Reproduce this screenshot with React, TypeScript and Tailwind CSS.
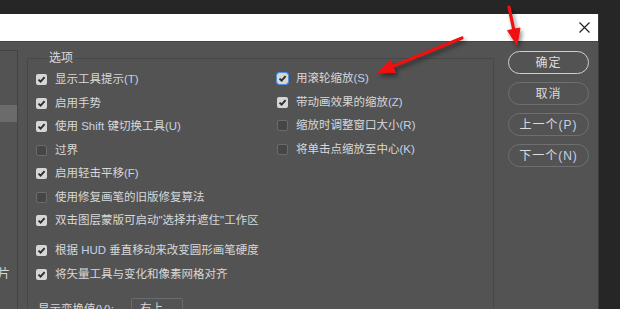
import type { ReactNode } from 'react';

const font = { fontFamily: '"Liberation Sans", "Noto Sans CJK SC", sans-serif' };

// ascii runs get the faint blue tint seen in the screenshot
function Label({ text }: { text: string }) {
  const parts = text.split(/([A-Za-z()]+(?:\([A-Z]\))?)/g).filter(Boolean);
  return (
    <span>
      {parts.map((p, i) =>
        /[A-Za-z]/.test(p) ? (
          <span key={i} className="text-[#c3d2ea]">{p}</span>
        ) : (
          <span key={i}>{p}</span>
        )
      )}
    </span>
  );
}

function Box({ checked, focus }: { checked: boolean; focus?: boolean }) {
  if (!checked)
    return <span className="w-[11px] h-[11px] rounded-[2px] bg-[#464646] border border-[#6b6b6b] shrink-0" />;
  return (
    <span
      className={`w-[11px] h-[11px] rounded-[2px] bg-[#d6d6d6] shrink-0 flex items-center justify-center ${
        focus ? 'outline outline-[1.5px] outline-[#4d8fe0]' : ''
      }`}
    >
      <svg width="9" height="9" viewBox="0 0 9 9">
        <path d="M1.5 4.6 L3.6 6.7 L7.6 2.2" fill="none" stroke="#2e2e2e" strokeWidth="1.9" />
      </svg>
    </span>
  );
}

function Row({ label, checked, focus, extra }: { label: string; checked: boolean; focus?: boolean; extra?: string }) {
  return (
    <div className={`h-[23.5px] flex items-center gap-[8px] ${extra ?? ''}`}>
      <Box checked={checked} focus={focus} />
      <Label text={label} />
    </div>
  );
}

const leftRows = [
  { label: '显示工具提示(T)', checked: true },
  { label: '启用手势', checked: true },
  { label: '使用 Shift 键切换工具(U)', checked: true },
  { label: '过界', checked: false },
  { label: '启用轻击平移(F)', checked: true },
  { label: '使用修复画笔的旧版修复算法', checked: false },
  { label: '双击图层蒙版可启动"选择并遮住"工作区', checked: true },
];

const lowerRows = [
  { label: '根据 HUD 垂直移动来改变圆形画笔硬度', checked: true },
  { label: '将矢量工具与变化和像素网格对齐', checked: true },
];

const rightRows = [
  { label: '用滚轮缩放(S)', checked: true, focus: true },
  { label: '带动画效果的缩放(Z)', checked: true },
  { label: '缩放时调整窗口大小(R)', checked: false },
  { label: '将单击点缩放至中心(K)', checked: false },
];

function Btn({ children, primary }: { children: ReactNode; primary?: boolean }) {
  return (
    <div
      className={`h-[23px] rounded-full flex items-center justify-center text-[12px] text-[#dcdcdc] tracking-[1px] ${
        primary ? 'border-[1.5px] border-[#cfcfcf]' : 'border border-[#6f6f6f]'
      }`}
    >
      {children}
    </div>
  );
}

export default function App() {
  return (
    <div className="relative w-[620px] h-[309px] overflow-hidden bg-[#262626] pt-[14px]" style={font}>
      <div className="w-[599px] h-[295px] flex flex-col border-r border-[#3a3a3a]">
        {/* title bar */}
        <div className="h-[27px] bg-white flex items-center justify-end pr-[8px] shrink-0">
          <svg width="11" height="11" viewBox="0 0 11 11">
            <path d="M0.5 0.5 L10.5 10.5 M10.5 0.5 L0.5 10.5" stroke="#222" strokeWidth="1.2" />
          </svg>
        </div>

        {/* body */}
        <div className="flex-1 bg-[#535353] border-t border-[#454545] flex text-[11.5px] text-[#d8d8d8]">
          {/* left category list */}
          <div className="w-[18px] mt-[8px] border-t border-r border-[#444] flex flex-col shrink-0">
            <div className="h-[54px]" />
            <div className="h-[17px] bg-[#6b6b6b]" />
            <div className="h-[144px]" />
            <div className="text-[12px] leading-[16px] -ml-[2px]">片</div>
          </div>

          {/* options group */}
          <fieldset className="ml-[9px] mt-[8px] w-[467px] h-[300px] border border-[#474747] pl-[8px] pt-[2px] shrink-0">
            <legend className="ml-[11px] px-[2px] text-[12px] leading-[16px] text-[#dcdcdc]">选项</legend>
            <div className="flex">
              <div className="w-[241px] shrink-0 flex flex-col whitespace-nowrap">
                {leftRows.map((r) => (
                  <Row key={r.label} {...r} />
                ))}
                {lowerRows.map((r, i) => (
                  <Row key={r.label} {...r} extra={i === 0 ? 'mt-[6.5px]' : ''} />
                ))}
                <div className="mt-[12px] ml-[2px] flex items-start gap-[17px]">
                  <span className="pt-[3px]"><Label text="显示变换值(V):" /></span>
                  <div className="w-[52px] h-[22px] border border-[#6a6a6a] rounded-[2px] flex items-center justify-between px-[8px]">
                    <span>右上</span>
                    <span className="text-[10px] text-[#bbb]">⌄</span>
                  </div>
                </div>
              </div>
              <div className="flex flex-col whitespace-nowrap -mt-[1px]">
                {rightRows.map((r) => (
                  <Row key={r.label} {...r} />
                ))}
              </div>
            </div>
          </fieldset>

          {/* buttons */}
          <div className="ml-[14px] mt-[9px] w-[81px] flex flex-col gap-[8px] shrink-0">
            <Btn primary>确定</Btn>
            <Btn>取消</Btn>
            <Btn>
              上一个<span className="text-[#c3d2ea]">(P)</span>
            </Btn>
            <Btn>
              下一个<span className="text-[#c3d2ea]">(N)</span>
            </Btn>
          </div>
        </div>
      </div>

      {/* red annotation arrows */}
      <svg
        className="absolute inset-0 pointer-events-none"
        width="620"
        height="309"
        viewBox="0 0 620 309"
        style={{ filter: 'drop-shadow(2px 3px 2px rgba(0,0,0,0.45))' }}
      >
        <g fill="#f01010" stroke="#f01010">
          <line x1="462" y1="38" x2="391" y2="67" strokeWidth="3.2" strokeLinecap="round" />
          <polygon points="378,73 395.5,72.5 390.5,60.5" strokeWidth="1" strokeLinejoin="round" />
          <line x1="509" y1="7" x2="514" y2="31" strokeWidth="3.2" strokeLinecap="round" />
          <polygon points="517,45 520,28 507.5,30.5" strokeWidth="1" strokeLinejoin="round" />
        </g>
      </svg>
    </div>
  );
}
